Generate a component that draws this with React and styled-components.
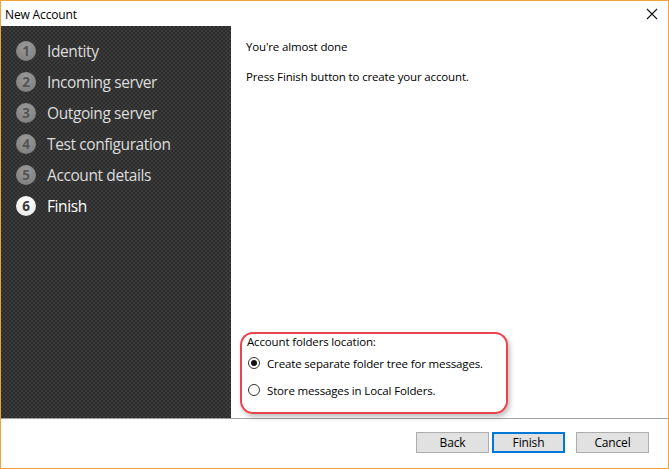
import React from 'react'
import styled, { createGlobalStyle } from 'styled-components'

const Global = createGlobalStyle`
html, body {
    margin: 0;
    padding: 0;
    background: #fff;
}
body {
    font-family: "Segoe UI", "Open Sans", "Liberation Sans", sans-serif;
}
`

const steps = ['Identity', 'Incoming server', 'Outgoing server', 'Test configuration', 'Account details', 'Finish']

const App = () => {
    return (
        <>
            <Global />
            <Window>
                <TitleBar>
                    <span>New Account</span>
                    <CloseBtn>
                        <svg width="12" height="12" viewBox="0 0 12 12">
                            <path d="M1 1 L11 11 M11 1 L1 11" stroke="#111" strokeWidth="1.1" />
                        </svg>
                    </CloseBtn>
                </TitleBar>
                <Body>
                    <Sidebar>
                        {steps.map((s, i) => (
                            <Step key={s} active={i === steps.length - 1}>
                                <Num active={i === steps.length - 1}>{i + 1}</Num>
                                <span>{s}</span>
                            </Step>
                        ))}
                    </Sidebar>
                    <Content>
                        <Para>You're almost done</Para>
                        <Para>Press Finish button to create your account.</Para>
                        <Spacer />
                        <Highlight>
                            <Label>Account folders location:</Label>
                            <Radio>
                                <Dot checked />
                                <span>Create separate folder tree for messages.</span>
                            </Radio>
                            <Radio>
                                <Dot />
                                <span>Store messages in Local Folders.</span>
                            </Radio>
                        </Highlight>
                    </Content>
                </Body>
                <Footer>
                    <Button>Back</Button>
                    <Button primary>Finish</Button>
                    <Button gap>Cancel</Button>
                </Footer>
            </Window>
        </>
    )
}

export default App

const Window = styled.div`
width: 669px;
height: 469px;
box-sizing: border-box;
border: 1px solid #f0a33a;
display: flex;
flex-direction: column;
background: #fff;
color: #000;
font-size: 11.5px;
letter-spacing: -0.15px;
`
const TitleBar = styled.div`
height: 25px;
display: flex;
align-items: center;
justify-content: space-between;
padding: 0 10px 0 4px;
font-size: 12px;
span {
    padding-top: 1px;
}
`
const CloseBtn = styled.div`
display: flex;
align-items: center;
padding-top: 1px;
`
const Body = styled.div`
display: flex;
height: 392px;
border-bottom: 1px solid #a0a0a0;
`
const Sidebar = styled.div`
width: 230px;
padding-top: 13px;
box-sizing: border-box;
background-color: #333;
background-image: repeating-conic-gradient(#2c2c2c 0 25%, #3b3b3b 0 50%);
background-size: 4px 4px;
display: flex;
flex-direction: column;
gap: 7px;
`
const Step = styled.div`
display: flex;
align-items: center;
height: 24px;
padding-left: 15px;
gap: 11px;
font-size: 15.5px;
color: ${p => (p.active ? '#ffffff' : '#dcdcdc')};
span {
    letter-spacing: -0.4px;
}
`
const Num = styled.div`
width: 20px;
height: 20px;
border-radius: 50%;
display: flex;
align-items: center;
justify-content: center;
font-size: 13.5px;
font-weight: bold;
letter-spacing: 0;
background: ${p => (p.active ? 'radial-gradient(circle at 50% 30%, #ffffff, #e4e4e4)' : 'radial-gradient(circle at 50% 30%, #9a9a9a, #7a7a7a)')};
color: ${p => (p.active ? '#3a3a3a' : '#555')};
`
const Content = styled.div`
flex: 1;
display: flex;
flex-direction: column;
padding: 14px 0 4px 15px;
`
const Para = styled.p`
margin: 0 0 16px;
line-height: 14px;
`
const Spacer = styled.div`
flex: 1;
`
const Highlight = styled.div`
width: 268px;
height: 82px;
margin-left: -6px;
box-sizing: border-box;
border: 2px solid #e8434f;
border-radius: 13px;
box-shadow: 2px 3px 5px rgba(0, 0, 0, 0.25);
padding: 0 0 0 5px;
display: flex;
flex-direction: column;
`
const Label = styled.div`
line-height: 16px;
height: 16px;
margin-bottom: 5px;
`
const Radio = styled.div`
display: flex;
align-items: center;
gap: 7px;
height: 16px;
margin-bottom: 11px;
padding-left: 1px;
`
const Dot = styled.div`
width: 12px;
height: 12px;
border-radius: 50%;
border: 1px solid #333;
box-sizing: border-box;
position: relative;
flex-shrink: 0;
&::after {
    content: '';
    display: ${p => (p.checked ? 'block' : 'none')};
    position: absolute;
    left: 2px;
    top: 2px;
    width: 6px;
    height: 6px;
    border-radius: 50%;
    background: #111;
}
`
const Footer = styled.div`
flex: 1;
display: flex;
align-items: center;
justify-content: flex-end;
padding: 0 19px 2px 0;
gap: 3px;
`
const Button = styled.button`
width: 73px;
height: 21px;
box-sizing: border-box;
margin-left: ${p => (p.gap ? '8px' : '0')};
background: #e1e1e1;
border: ${p => (p.primary ? '2px solid #0078d7' : '1px solid #adadad')};
font-family: inherit;
font-size: 12px;
letter-spacing: -0.15px;
color: #000;
padding: 0;
`
